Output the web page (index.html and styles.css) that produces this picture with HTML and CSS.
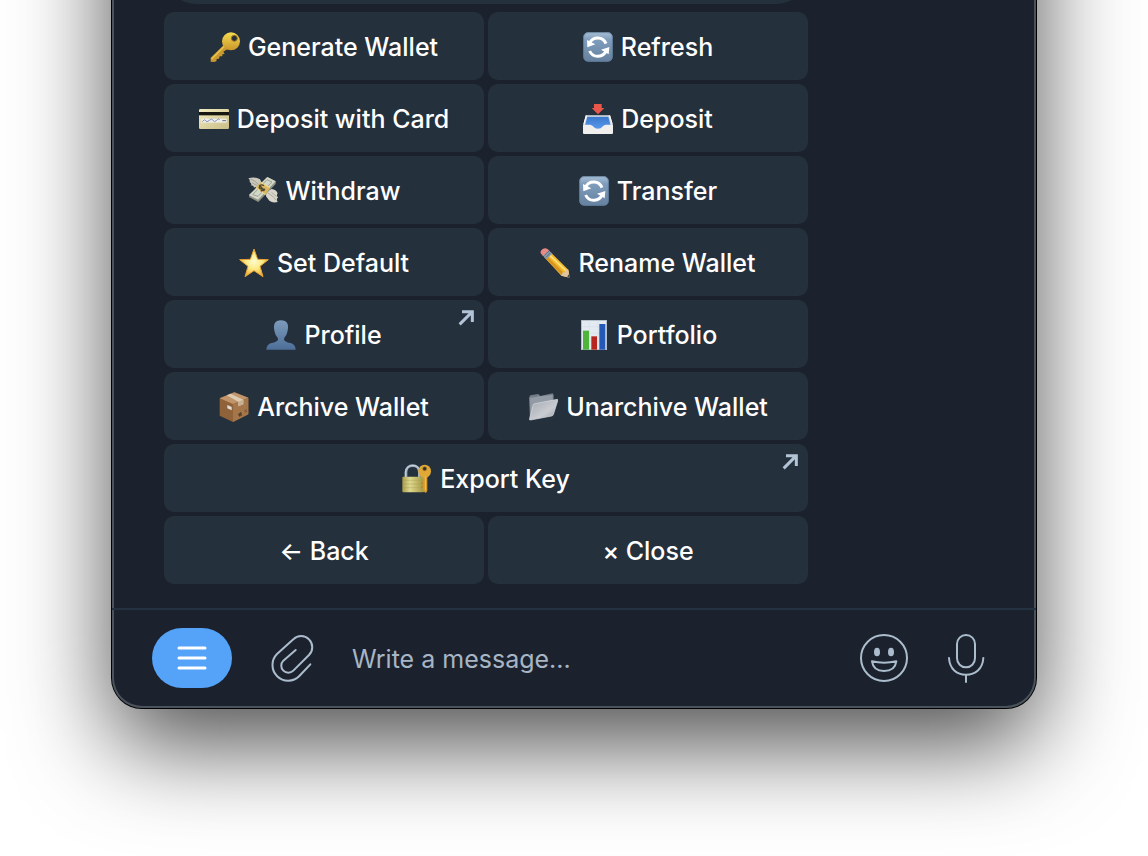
FILE: index.html
```
<!DOCTYPE html>
<html lang="en">
<head>
    <meta charset="UTF-8">
    <meta name="viewport" content="width=device-width, initial-scale=1.0">
    <title>Wallet</title>

    <link rel="stylesheet" href="styles.css">
</head>
<body>
    <!-- shared icons and gradients -->
    <svg class="defs" aria-hidden="true">
        <defs>
            <linearGradient id="gold" x1="0" y1="0" x2="0" y2="1">
                <stop offset="0" stop-color="#f6dc4e"/><stop offset="1" stop-color="#c9962c"/>
            </linearGradient>
            <linearGradient id="tile" x1="0" y1="0" x2="0" y2="1">
                <stop offset="0" stop-color="#a9c0d6"/><stop offset="0.25" stop-color="#7f9dbd"/><stop offset="1" stop-color="#66819f"/>
            </linearGradient>
            <linearGradient id="card" x1="0" y1="0" x2="1" y2="1">
                <stop offset="0" stop-color="#f3ecc0"/><stop offset="1" stop-color="#c9bd86"/>
            </linearGradient>
            <radialGradient id="star" cx="0.5" cy="0.45" r="0.55">
                <stop offset="0" stop-color="#fffbd0"/><stop offset="0.5" stop-color="#fdea85"/><stop offset="1" stop-color="#f2b233"/>
            </radialGradient>
            <linearGradient id="person" x1="0" y1="0" x2="0" y2="1">
                <stop offset="0" stop-color="#7d9cbb"/><stop offset="1" stop-color="#4d6e98"/>
            </linearGradient>
            <linearGradient id="blue" x1="0" y1="0" x2="0" y2="1">
                <stop offset="0" stop-color="#3c78cc"/><stop offset="1" stop-color="#5b9df0"/>
            </linearGradient>
            <linearGradient id="folder" x1="0" y1="0" x2="1" y2="1">
                <stop offset="0" stop-color="#a3a9b1"/><stop offset="0.6" stop-color="#c9ccd1"/><stop offset="1" stop-color="#969ba3"/>
            </linearGradient>
            <linearGradient id="brass" x1="0" y1="0" x2="1" y2="0">
                <stop offset="0" stop-color="#a69c4c"/><stop offset="0.35" stop-color="#e0d98e"/><stop offset="1" stop-color="#a2963f"/>
            </linearGradient>
        </defs>
        <symbol id="icon-refresh" viewBox="0 0 90 90">
            <rect x="1" y="1" width="88" height="88" rx="15" fill="url(#tile)"/>
            <rect x="2" y="2" width="86" height="86" rx="14" fill="none" stroke="#5f7c9c" stroke-width="2"/>
            <path d="M20 33A27 27 0 0 1 69 35M70 55A27 27 0 0 1 20 57" fill="none" stroke="#fff" stroke-width="9"/>
            <path d="M12 24L13 46L37 37Z M79 45L77 67L54 53Z" fill="#fff"/>
        </symbol>
        <symbol id="icon-link" viewBox="0 0 48 48">
            <path d="M5 43L40 8M12 5H43V36" fill="none" stroke="#b3c4d6" stroke-width="9"/>
        </symbol>
    </svg>

    <main class="window">
        <section class="chat">
            <div class="bubble"></div>
            <div class="keyboard">
                <button class="key">
                    <svg class="emoji" viewBox="0 0 90 90" aria-hidden="true">
                        <path d="M42 38L2 77V89L12 90L19 88L20 81L27 80L29 73L37 73L37 67L44 66L40 59L54 50Z" fill="#c9982f"/>
                        <path d="M43 43L5 81" stroke="#ecc84c" stroke-width="4"/>
                        <circle cx="63" cy="28" r="27" fill="url(#gold)"/>
                        <circle cx="73" cy="19" r="9" fill="#25303d" stroke="#a87c20" stroke-width="3"/>
                    </svg>
                    Generate Wallet
                </button>
                <button class="key">
                    <svg class="emoji" aria-hidden="true"><use href="#icon-refresh"/></svg>
                    Refresh
                </button>
                <button class="key">
                    <svg class="emoji" viewBox="0 0 90 90" aria-hidden="true">
                        <rect x="0" y="15" width="90" height="60" rx="4" fill="url(#card)"/>
                        <rect x="0" y="24" width="90" height="10" fill="#17160f"/>
                        <rect x="7" y="44" width="76" height="12" fill="#f0eee5"/>
                        <path d="M10 53Q17 43 20 50T31 49T42 49T53 49T61 47" fill="none" stroke="#7d8fc4" stroke-width="3"/>
                        <path d="M70 50H81" stroke="#5e6b8b" stroke-width="3"/>
                    </svg>
                    Deposit with Card
                </button>
                <button class="key">
                    <svg class="emoji" viewBox="0 0 90 90" aria-hidden="true">
                        <path d="M8 34H81L89 64H1Z" fill="#dfe2e5"/>
                        <path d="M13 38H76L83 64L55 80H35L6 64Z" fill="url(#blue)"/>
                        <path d="M0 62H20C31 62 32 74 45 74S59 62 69 62H90V87Q90 90 87 90H3Q0 90 0 87Z" fill="#f0efed"/>
                        <path d="M2 61L10 34M88 61L80 34" stroke="#fff" stroke-width="3"/>
                        <path d="M33 0H56V12H64L45 31L26 12H33Z" fill="#e9574a"/>
                    </svg>
                    Deposit
                </button>
                <button class="key">
                    <svg class="emoji" viewBox="0 0 90 90" aria-hidden="true">
                        <path d="M1 7Q20 1 36 10L44 26L29 36Q23 31 18 35Q17 27 10 29Q11 20 5 19Q7 12 1 7Z" fill="#cbc9be"/>
                        <path d="M7 9Q22 14 33 27M12 20L29 30" fill="none" stroke="#918f85" stroke-width="2"/>
                        <path d="M55 46L71 39Q84 40 89 52Q84 57 90 65Q84 67 89 78Q74 82 64 74L54 61Z" fill="#d8d6cb"/>
                        <path d="M60 51Q75 59 85 73M70 48L86 62" fill="none" stroke="#96948a" stroke-width="2"/>
                        <path d="M3 57L58 3L83 16L83 24L31 78L4 64Z" fill="#8e9385"/>
                        <path d="M3 57L58 3L83 16L30 71Z" fill="#d3d7c9"/>
                        <path d="M14 56L57 11L72 18L30 61Z" fill="none" stroke="#9ea491" stroke-width="3"/>
                        <path d="M23 35L38 18L66 35L52 57Z" fill="#dcb961"/>
                        <path d="M25 36L52 56M39 20L65 35" stroke="#f3dc99" stroke-width="3"/>
                        <path d="M48 29Q40 23 35 31T44 39T38 45M34 27L49 45" fill="none" stroke="#504831" stroke-width="4"/>
                    </svg>
                    Withdraw
                </button>
                <button class="key">
                    <svg class="emoji" aria-hidden="true"><use href="#icon-refresh"/></svg>
                    Transfer
                </button>
                <button class="key">
                    <svg class="emoji" viewBox="0 0 90 90" aria-hidden="true">
                        <path d="M45 3L56 34L88 35L63 55L72 86L45 68L18 86L27 55L2 35L34 34Z" fill="url(#star)" stroke="#e5a136" stroke-width="3" stroke-linejoin="round"/>
                    </svg>
                    Set Default
                </button>
                <button class="key">
                    <svg class="emoji" viewBox="0 0 90 90" aria-hidden="true">
                        <path d="M13 28L31 12L85 65L89 89L64 83Z" fill="#f0b92f"/>
                        <path d="M20 23L77 80L66 82L13 28Z" fill="#d7951f"/>
                        <path d="M25 18L83 73" stroke="#ffe078" stroke-width="5"/>
                        <path d="M64 83L68 73L76 73L78 64L85 65L89 89Z" fill="#dec59b"/>
                        <path d="M82 88L84 81L88 79L90 90Z" fill="#4b4845"/>
                        <path d="M7 21L25 5L37 17L19 34Z" fill="#8b9ba9"/>
                        <path d="M13 22L27 9M18 28L32 14" stroke="#536c85" stroke-width="3"/>
                        <path d="M2 16Q0 9 7 4Q15-2 21 2L27 7L9 24Z" fill="#e78985"/>
                    </svg>
                    Rename Wallet
                </button>
                <button class="key">
                    <svg class="emoji" viewBox="0 0 90 90" aria-hidden="true">
                        <path d="M1 89Q2 72 17 69Q34 65 36 59L35 53Q28 47 26 36Q17 2 45 1Q73 2 64 36Q62 47 55 53L54 59Q56 65 73 69Q88 72 89 89Z" fill="url(#person)"/>
                    </svg>
                    Profile
                    <svg class="link-mark" aria-hidden="true"><use href="#icon-link"/></svg>
                </button>
                <button class="key">
                    <svg class="emoji" viewBox="0 0 90 90" aria-hidden="true">
                        <rect x="7" y="1" width="76" height="88" fill="#e3eaf2" stroke="#bcc9d7" stroke-width="2"/>
                        <path d="M31 2V88M57 2V88M8 20H82M8 40H82M8 62H82" stroke="#d5dfe9" stroke-width="2"/>
                        <rect x="12" y="32" width="18" height="57" fill="#4fb43a"/>
                        <rect x="37" y="49" width="17" height="40" fill="#b7261e"/>
                        <rect x="61" y="12" width="18" height="77" fill="#2559b8"/>
                    </svg>
                    Portfolio
                </button>
                <button class="key">
                    <svg class="emoji" viewBox="0 0 90 90" aria-hidden="true">
                        <path d="M2 19L46 1L88 17V67L42 90L2 71Z" fill="#8f6239"/>
                        <path d="M2 19L46 1L88 17L42 36Z" fill="#c1946a"/>
                        <path d="M42 36L88 17V67L42 90Z" fill="#a5764a"/>
                        <path d="M23 10L35 5L73 23V37L58 43V29Z" fill="#dccab2"/>
                        <path d="M58 29L73 23V37L58 43Z" fill="#c6b091"/>
                        <path d="M25 39L38 45V55L25 49Z" fill="#e0ded8"/>
                        <path d="M58 67L66 61L68 70L61 73ZM76 57L83 53M78 61L84 58" fill="#5a4027" stroke="#5a4027" stroke-width="2"/>
                    </svg>
                    Archive Wallet
                </button>
                <button class="key">
                    <svg class="emoji" viewBox="0 0 90 90" aria-hidden="true">
                        <path d="M3 17L7 10L31 6L37 12L74 4L77 9V30L6 82Z" fill="#747c87"/>
                        <path d="M6 18L34 13L74 9V29L20 38L7 68Z" fill="#929aa5"/>
                        <path d="M20 35L88 22Q91 22 89 27L76 68Q75 71 71 72L8 84Q3 85 5 79L15 40Q16 36 20 35Z" fill="url(#folder)" stroke="#dadde1" stroke-width="2"/>
                    </svg>
                    Unarchive Wallet
                </button>
                <button class="key key-wide">
                    <svg class="emoji" viewBox="0 0 90 90" aria-hidden="true">
                        <path d="M12 42V25C12-2 52-2 52 25V42" fill="none" stroke="#9fb0bf" stroke-width="8"/>
                        <path d="M10 40V25C11 0 46-2 52 16" fill="none" stroke="#dce6ee" stroke-width="2"/>
                        <rect x="1" y="38" width="65" height="47" rx="3" fill="url(#brass)"/>
                        <path d="M2 49H65M2 60H65M2 71H65" stroke="#9c944d" stroke-width="1"/>
                        <path d="M63 32H76V80L72 87L63 82Z" fill="#d59a2a"/>
                        <path d="M63 54H57V60H62V66H57V72H63Z" fill="#c28822"/>
                        <ellipse cx="68" cy="22" rx="19" ry="20" fill="#e0a834"/>
                        <circle cx="68" cy="14" r="6" fill="#2a3038" stroke="#a97518" stroke-width="2"/>
                        <path d="M70 37V79" stroke="#f1c35a" stroke-width="3"/>
                    </svg>
                    Export Key
                    <svg class="link-mark" aria-hidden="true"><use href="#icon-link"/></svg>
                </button>
                <button class="key">← Back</button>
                <button class="key">× Close</button>
            </div>
        </section>

        <form class="composer">
            <button type="button" class="menu-button" aria-label="Menu">
                <svg width="30" height="24" viewBox="0 0 30 24">
                    <path d="M2 2H28M2 12H28M2 22H28" stroke="#fff" stroke-width="3" stroke-linecap="round"/>
                </svg>
            </button>
            <button type="button" class="icon-button" aria-label="Attach">
                <svg width="40" height="48" viewBox="516 130 120 144">
                    <path d="M631 221L598 256A47 47 0 0 1 531 190L580 146A33 33 0 0 1 627 193L580 240A21 21 0 0 1 550 210L587 178"/>
                </svg>
            </button>
            <input type="text" class="message" aria-label="Message" placeholder="Write a message...">
            <button type="button" class="icon-button" aria-label="Emoji">
                <svg width="48" height="48" viewBox="90 132 144 144">
                    <circle cx="162" cy="204" r="69"/>
                    <path d="M126 214Q162 222 199 214Q195 243 162 243Q130 243 126 214Z"/>
                    <g class="eyes">
                        <ellipse cx="141" cy="186" rx="9" ry="13"/>
                        <ellipse cx="183" cy="186" rx="9" ry="13"/>
                    </g>
                </svg>
            </button>
            <button type="button" class="icon-button" aria-label="Voice message">
                <svg width="36" height="48" viewBox="354 132 108 144">
                    <rect x="381" y="135" width="54" height="97" rx="27"/>
                    <path d="M357 204C359 237 380 254 408 254S458 237 460 204M408 254V276"/>
                </svg>
            </button>
        </form>
    </main>
</body>
</html>
```
FILE: styles.css
```
* {
    box-sizing: border-box;
}
body {
    display: flow-root;
    min-height: 100vh;
    margin: 0;
    background-color: #fff;
    font-family: Inter, "Liberation Sans", sans-serif;
}
button {
    border: none;
    padding: 0;
    background: none;
    font: inherit;
    cursor: pointer;
}
.defs {
    position: absolute;
    width: 0;
    height: 0;
}

/* the window is scrolled past its top edge */
.window {
    margin: -200px 112px 0;
    background-color: #1b222d;
    border-radius: 30px;
    box-shadow: inset 0 0 0 2px #4a525b, 0 0 0 1px #000, 0 36px 96px rgba(0, 0, 0, 0.7);
}
.chat {
    padding: 40px 52px 24px;
}
.bubble {
    max-width: 644px;
    height: 164px;
    margin-bottom: 8px;
    border-radius: 32px;
    background-color: #25303d;
}
.keyboard {
    display: grid;
    grid-template-columns: 1fr 1fr;
    gap: 4px;
    max-width: 644px;
}
.key {
    position: relative;
    display: flex;
    align-items: center;
    justify-content: center;
    gap: 8px;
    height: 68px;
    padding-top: 2px;
    border-radius: 10px;
    background-color: #25303d;
    color: #fff;
    font-size: 25px;
    font-weight: 500;
    font-feature-settings: "calt" 0;
}
.key-wide {
    grid-column: span 2;
}
.emoji {
    width: 30px;
    height: 30px;
}
.link-mark {
    position: absolute;
    top: 10px;
    right: 10px;
    width: 16px;
    height: 16px;
}

.composer {
    display: flex;
    align-items: center;
    gap: 40px;
    padding: 18px 52px 20px 40px;
    border-top: 2px solid #233140;
}
.menu-button {
    display: flex;
    align-items: center;
    justify-content: center;
    width: 80px;
    height: 60px;
    border-radius: 30px;
    background-color: #54a3f8;
}
.icon-button {
    display: flex;
}
.icon-button svg {
    overflow: visible;
    fill: none;
    stroke: #abbccd;
    stroke-width: 6;
    stroke-linecap: round;
    stroke-linejoin: round;
}
.icon-button .eyes {
    fill: #abbccd;
    stroke: none;
}
.message {
    flex: 1;
    min-width: 0;
    border: none;
    padding: 2px 0 0;
    outline: none;
    background: none;
    color: #fff;
    font: inherit;
    font-size: 25px;
}
.message::placeholder {
    color: #a7b5c5;
    opacity: 1;
}
```
